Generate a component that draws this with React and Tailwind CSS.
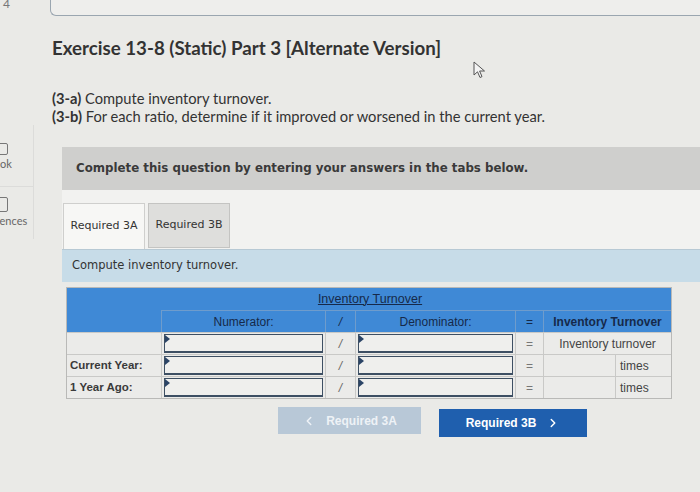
import { ChevronLeft, ChevronRight } from "lucide-react";

const verdana = { fontFamily: '"DejaVu Sans", Verdana, sans-serif' };
const lato = { fontFamily: "Lato, sans-serif" };

function InputBox() {
  return (
    <div className="relative h-[19px] mx-[2px] border border-[#3d4f63] border-b-2 bg-[#efefed]">
      <span className="absolute left-0 top-0 w-0 h-0 border-t-[4px] border-b-[4px] border-l-[5px] border-t-transparent border-b-transparent border-l-[#2b4466]" />
    </div>
  );
}

function BodyRow({ label, result }) {
  return (
    <div className="flex h-[22px] border-t border-[#c9c9c7]">
      <div className="w-[95px] flex items-center pl-[3px] font-bold text-[11.5px] text-[#3a3a3a] border-r border-[#c9c9c7]">
        {label}
      </div>
      <div className="w-[164px] flex flex-col justify-center border-r border-[#c9c9c7]">
        <InputBox />
      </div>
      <div className="w-[30px] flex items-center justify-center text-[12px] italic text-[#666] border-r border-[#c9c9c7]">
        /
      </div>
      <div className="w-[160px] flex flex-col justify-center border-r border-[#c9c9c7]">
        <InputBox />
      </div>
      <div className="w-[28px] flex items-center justify-center text-[12px] text-[#777] border-r border-[#c9c9c7]">
        =
      </div>
      {result ? (
        <div className="flex-1 flex items-center justify-center text-[12px] text-[#444]">
          {result}
        </div>
      ) : (
        <div className="flex-1 flex">
          <div className="w-[72px] border-r border-[#c9c9c7]" />
          <div className="flex-1 flex items-center pl-[4px] text-[12px] text-[#444]">times</div>
        </div>
      )}
    </div>
  );
}

export default function App() {
  return (
    <div
      className="relative w-[700px] h-[492px] overflow-hidden bg-[#eaeae7] text-[#333]"
      style={{ fontFamily: '"Liberation Sans", Arial, sans-serif' }}
    >
      {/* top strip */}
      <div className="flex h-[16px]">
        <div className="w-[50px] -mt-[5px] pl-[3px] text-[12px] text-[#777]" style={lato}>
          4
        </div>
        <div className="flex-1 -mt-[10px] h-[26px] border-l border-b border-[#9aa6b0] rounded-bl-[6px] bg-[#eeeeec]" />
      </div>

      <div className="flex">
        {/* sidebar, cut off at the left edge */}
        <div className="w-[34px] shrink-0 pt-[109px] overflow-hidden text-[11px] leading-[13px] text-[#666]" style={lato}>
          <div className="h-[62px] pt-[18px] border-b border-r border-[#dcdcda]">
            <div className="w-[14px] h-[12px] -ml-[6px] border border-[#777] rounded-[2px] mb-[2px]" />
            <div className="-ml-[19px] whitespace-nowrap">eBook</div>
          </div>
          <div className="h-[52px] pt-[10px] border-r border-[#dcdcda]">
            <div className="w-[14px] h-[15px] -ml-[6px] border border-[#777] rounded-[2px] mb-[2px]" />
            <div className="-ml-[26px] whitespace-nowrap">References</div>
          </div>
        </div>

        {/* main */}
        <div className="flex-1 flex flex-col">
          <div style={lato}>
            <h1 className="ml-[18px] mt-[20px] text-[18.7px] leading-[24px] font-bold text-[#333]">
              Exercise 13-8 (Static) Part 3 [Alternate Version]
            </h1>
            <div className="ml-[18px] mt-[29px] text-[14.7px] leading-[18px] text-[#333]">
              <p>
                <span className="font-bold">(3-a)</span> Compute inventory turnover.
              </p>
              <p>
                <span className="font-bold">(3-b)</span> For each ratio, determine if it improved or worsened in the current year.
              </p>
            </div>
          </div>

          <div className="ml-[28px] mt-[22px] h-[43px] bg-[#cfcfcd] flex items-center pl-[14px]" style={verdana}>
            <span className="text-[11.8px] font-bold text-[#3a3a3a]">
              Complete this question by entering your answers in the tabs below.
            </span>
          </div>

          <div className="ml-[28px] bg-[#f2f2f0] pt-[13px] flex gap-[3px] pl-[1px]" style={verdana}>
            <div className="w-[82px] h-[46px] bg-[#f7f7f5] border border-b-0 border-[#cfcfcd] flex items-center justify-center text-[11px] text-[#333]">
              Required 3A
            </div>
            <div className="w-[82px] h-[45px] bg-[#dededc] border border-[#c4c4c2] flex items-center justify-center text-[11px] text-[#333]">
              Required 3B
            </div>
          </div>

          <div className="ml-[28px] h-[33px] bg-[#c7dce8] border-t border-[#b7c9d4] flex items-center pl-[10px] text-[11.5px] text-[#333]" style={verdana}>
            Compute inventory turnover.
          </div>

          {/* table */}
          <div className="ml-[32px] mt-[5px] w-[606px] border border-[#b9b9b7] bg-[#ebebe9]">
            <div className="h-[22px] bg-[#3f89d6] flex items-center justify-center">
              <span className="text-[12.5px] text-[#16294a] underline pl-[2px]">Inventory Turnover</span>
            </div>
            <div className="flex h-[22px] bg-[#3f89d6] text-[12px] text-[#16294a]">
              <div className="w-[95px] border-r border-[#6f9ccc]" />
              <div className="w-[164px] flex items-center justify-center border-r border-t border-[#6f9ccc]">Numerator:</div>
              <div className="w-[30px] flex items-center justify-center italic border-r border-t border-[#6f9ccc]">/</div>
              <div className="w-[160px] flex items-center justify-center border-r border-t border-[#6f9ccc]">Denominator:</div>
              <div className="w-[28px] flex items-center justify-center border-r border-t border-[#6f9ccc]">=</div>
              <div className="flex-1 flex items-center justify-center font-bold border-t border-[#6f9ccc]">Inventory Turnover</div>
            </div>
            <BodyRow label="" result="Inventory turnover" />
            <BodyRow label="Current Year:" />
            <BodyRow label="1 Year Ago:" />
          </div>

          {/* nav buttons */}
          <div className="ml-[244px] mt-[8px] flex items-start gap-[18px]">
            <button className="w-[143px] h-[27px] bg-[#b8c8d7] text-[#eef2f6] text-[12px] font-bold flex items-center justify-center gap-[10px]">
              <ChevronLeft size={14} strokeWidth={2.5} />
              <span>Required 3A</span>
            </button>
            <button className="mt-[2px] w-[148px] h-[28px] bg-[#1f5fae] text-white text-[12px] font-bold flex items-center justify-center gap-[10px]">
              <span>Required 3B</span>
              <ChevronRight size={14} strokeWidth={2.5} />
            </button>
          </div>
        </div>
      </div>

      {/* mouse cursor */}
      <svg className="absolute left-[473px] top-[61px]" width="14" height="18" viewBox="0 0 14 18">
        <path d="M1 1 L1 14 L4.5 10.8 L7 16.5 L9 15.6 L6.6 10 L11.5 10 Z" fill="#f4f4f4" stroke="#555" strokeWidth="1" strokeLinejoin="round" />
      </svg>
    </div>
  );
}
